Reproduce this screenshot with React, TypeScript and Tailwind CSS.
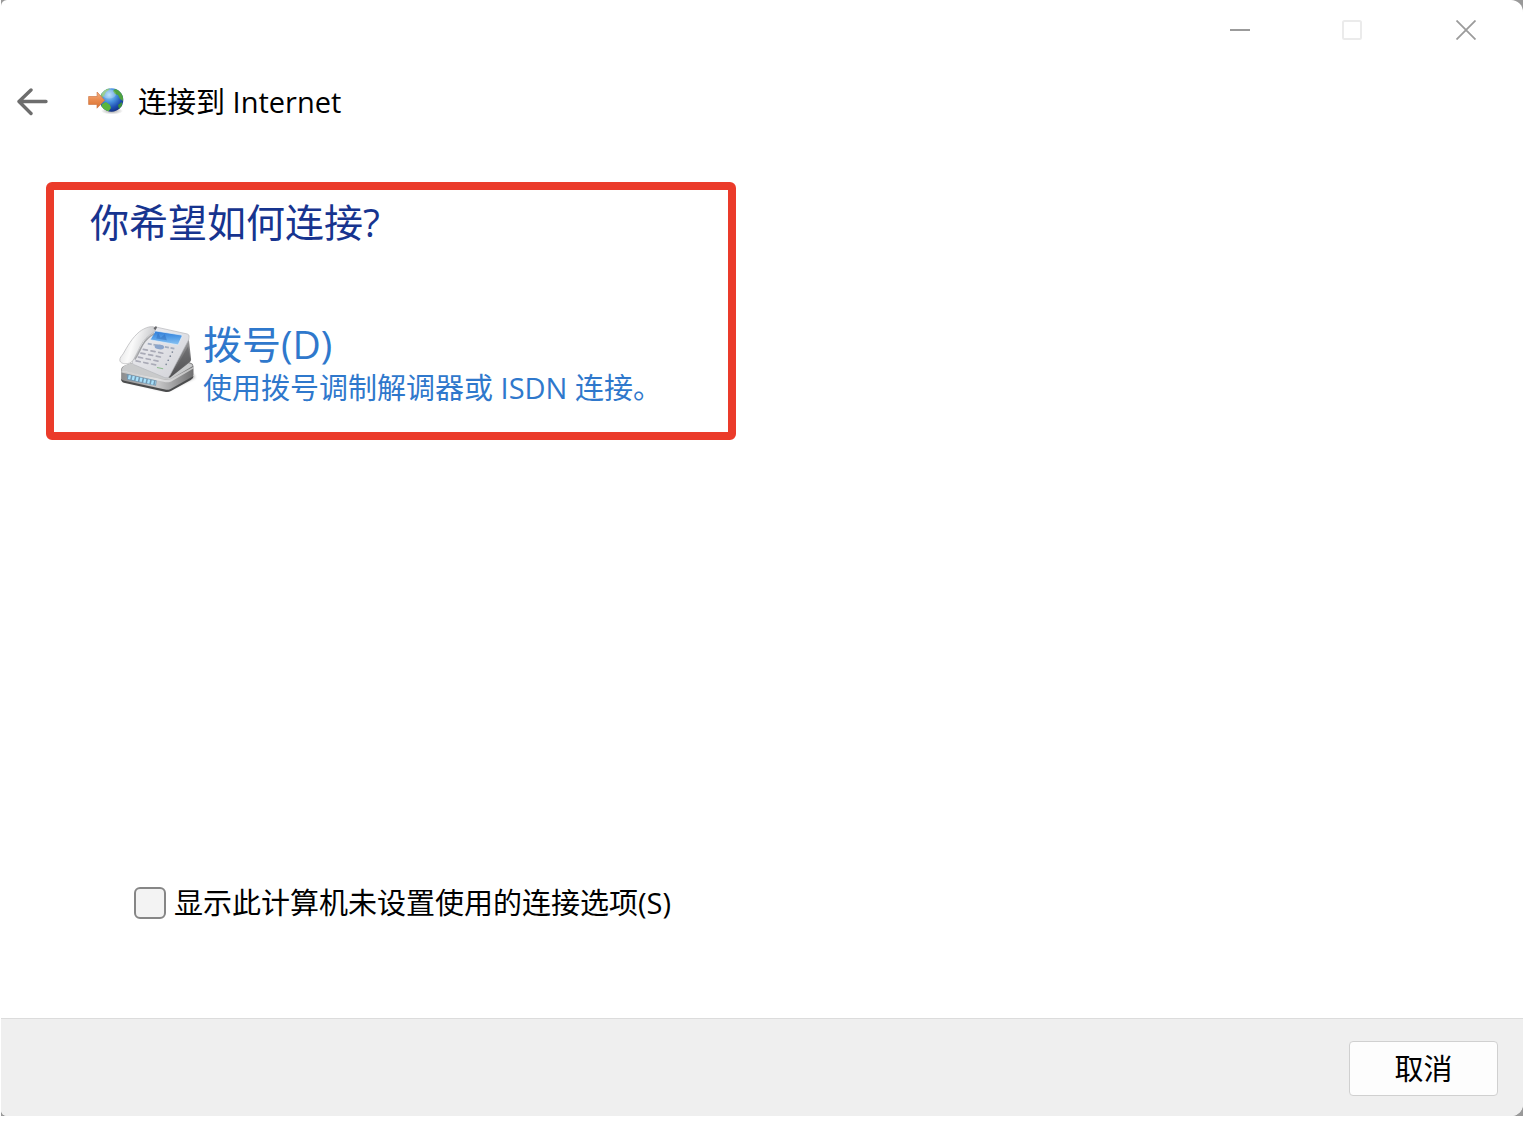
import { useState } from "react";

function BackArrowIcon() {
  return (
    <svg width="32" height="28" viewBox="0 0 32 28" fill="none" stroke="#6d6d6d" strokeWidth="3.4" strokeLinecap="round" strokeLinejoin="round">
      <path d="M15 2 3 13.500l12 12M3 13.500h27" />
    </svg>
  );
}

function GlobeIcon() {
  return (
    <svg width="36" height="28" viewBox="0 1 36 28">
      <defs>
        <radialGradient id="globe" cx="0.4" cy="0.28" r="0.75">
          <stop offset="0" stopColor="#a9d8f8" />
          <stop offset="0.4" stopColor="#4a93df" />
          <stop offset="0.75" stopColor="#1d4db0" />
          <stop offset="1" stopColor="#14307e" />
        </radialGradient>
        <linearGradient id="arrow" x1="0" y1="0" x2="0" y2="1">
          <stop offset="0" stopColor="#f5b083" />
          <stop offset="0.5" stopColor="#e98a4e" />
          <stop offset="1" stopColor="#d9702f" />
        </linearGradient>
        <radialGradient id="globeShadow">
          <stop offset="0" stopColor="#777" stopOpacity="0.7" />
          <stop offset="1" stopColor="#777" stopOpacity="0" />
        </radialGradient>
        <clipPath id="globeClip">
          <circle cx="23.500" cy="13" r="11.800" />
        </clipPath>
      </defs>
      <ellipse cx="24" cy="24" rx="11" ry="3.500" fill="url(#globeShadow)" />
      <circle cx="23.500" cy="13" r="11.800" fill="url(#globe)" />
      <g clipPath="url(#globeClip)">
        <path d="M12 7c3-4 6-6 10-6l-1 2-3 2-2 4-4 3z" fill="#7fbf78" />
        <path d="M27 2c4 0 7 3 8 7l0 5-3-2-2-4-3-1-2-3z" fill="#4fa33f" />
        <path d="M14 17l4-2 4 3 1 3-3 4-4-2-3-3z" fill="#5cb53c" />
        <path d="M30 18l4-3 0 4-3 3z" fill="#3b913b" />
        <ellipse cx="21" cy="7" rx="7" ry="4.500" fill="#fff" opacity="0.22" />
      </g>
      <path d="M0.600 9.500h8.500V5l7.500 8.200-7.600 8V17.500H0.600z" fill="url(#arrow)" stroke="#d07a48" strokeWidth="0.700" />
    </svg>
  );
}

function PhoneIcon() {
  return (
    <svg width="80" height="72" viewBox="27 22 234 211" className="shrink-0">
      <defs>
        <linearGradient id="body" x1="0" y1="0" x2="1" y2="1">
          <stop offset="0" stopColor="#f0f0f4" />
          <stop offset="1" stopColor="#d0d1d6" />
        </linearGradient>
        <linearGradient id="side" x1="0.500" y1="0" x2="0.600" y2="1">
          <stop offset="0" stopColor="#a0a0a2" />
          <stop offset="1" stopColor="#4c4c4e" />
        </linearGradient>
        <linearGradient id="base" x1="0" y1="0" x2="1" y2="0">
          <stop offset="0" stopColor="#8b8c8d" />
          <stop offset="0.500" stopColor="#c9c9ca" />
          <stop offset="0.700" stopColor="#a5a5a6" />
          <stop offset="1" stopColor="#6f6f70" />
        </linearGradient>
        <linearGradient id="handset" x1="0" y1="0" x2="1" y2="0.300">
          <stop offset="0" stopColor="#d9dadb" />
          <stop offset="0.450" stopColor="#fafafa" />
          <stop offset="1" stopColor="#c3c4c7" />
        </linearGradient>
        <linearGradient id="screen" x1="0" y1="0" x2="0" y2="1">
          <stop offset="0" stopColor="#2f7bd6" />
          <stop offset="0.500" stopColor="#559fe8" />
          <stop offset="1" stopColor="#8cc4f2" />
        </linearGradient>
        <filter id="phoneShadow" x="-20%" y="-50%" width="140%" height="200%">
          <feGaussianBlur stdDeviation="4" />
        </filter>
      </defs>
      <path d="M38 198 170 230 252 190 240 176 60 180z" fill="#444" opacity="0.600" filter="url(#phoneShadow)" />
      <path d="M36 168q0-8 9-12l30-12 158 2q14 2 15 12v24q0 6-8 10l-58 34q-8 4-18 2L44 204q-8-2-8-8z" fill="url(#base)" />
      <path d="M38 166q2-8 12-12l26-8 156 2q12 2 14 9L182 194q-8 4-18 2L40 172z" fill="#c9cacb" />
      <path d="M37 170 162 197q10 2 20-2l66-36v5l-65 38q-10 4-20 2L37 176z" fill="#f2f2f2" opacity="0.600" />
      <path d="M36 194q2 4 9 6l120 26q8 2 16-2l67-38q0 8-8 12l-58 32q-8 4-18 2L44 206q-8-3-8-12z" fill="#4b4c4d" />
      <path d="M232 76q3 4 4 16l5 46q0 5-4 8l-58 45-14-4z" fill="url(#side)" />
      <path d="M232 100 239 141 184 184z" fill="#555557" opacity="0.450" />
      <path d="M128 47q4-5 12-4l90 20q7 2 5 10l-1 7-56 106q-4 8-14 5L74 153q-9-3-5-11z" fill="url(#body)" stroke="#b4b5ba" strokeWidth="2" />
      <path d="m136 54 76 12q3 1 2 4l-11 25-82-15z" fill="url(#screen)" stroke="#e5eff8" strokeWidth="2" />
      <path d="m144 60 8 14 12-10 6 17-31-5z" fill="#2b66b8" opacity="0.450" />
      <path d="m114 91 78 15" stroke="#a3adbf" strokeWidth="5" strokeDasharray="12 5" />
      <ellipse cx="148" cy="101" rx="14" ry="7" fill="#8ba5cb" transform="rotate(8 148 101)" />
      <g stroke="#a9aab6" strokeWidth="5" strokeLinecap="round" strokeDasharray="12 11">
        <path d="m101 108 60 12" />
        <path d="m94 119 60 12" />
        <path d="m87 131 60 12" />
        <path d="m80 142 60 12" />
      </g>
      <g fill="#7e8798">
        <circle cx="186" cy="116" r="2.500" />
        <circle cx="180" cy="128" r="2.500" />
        <circle cx="174" cy="140" r="2.500" />
        <circle cx="168" cy="152" r="2.500" />
      </g>
      <path d="m141 161 18 4" stroke="#8cba8e" strokeWidth="3" />
      <path d="M90 56c14-10 28-16 40-14 9 3 8 11 0 17-16 10-29 22-37 38-7 14-12 26-19 38-5 9-11 14-20 15-11 1-21-2-22-10 0-8 5-12 10-19C54 100 68 74 90 56z" fill="url(#handset)" stroke="#b2b3b5" strokeWidth="2" />
      <path d="M76 138c10-15 15-28 23-43 8-14 19-24 34-33" fill="none" stroke="#88898c" strokeWidth="4" opacity="0.700" />
      <path d="m131 46 6-6q5 0 4 5l-5 7" fill="#67686b" />
      <path d="M52 180 140 199 138 215 54 197z" fill="#7296b0" />
      <path d="m57 189 80 18" stroke="#a7e0fa" strokeWidth="12" strokeDasharray="7 4.500" />
    </svg>
  );
}

export default function App() {
  const [showAll, setShowAll] = useState(false);

  return (
    <div className="flex min-h-screen flex-col bg-white pb-[7px] pl-px font-['Open_Sans','Noto_Sans_CJK_SC',sans-serif] text-[29px] leading-10 text-black">
      <div className="flex grow flex-col bg-[#999]">
        <div className="flex grow flex-col overflow-hidden rounded-tl-[6px] rounded-tr-xl rounded-br-xl rounded-bl-[6px] bg-white">
          <div className="flex h-[60px] justify-end">
            <button type="button" aria-label="最小化" className="flex w-28 items-center justify-center">
              <svg width="20" height="20" viewBox="0 0 20 20" stroke="#9b9b9b" strokeWidth="2">
                <path d="M0 10h20" />
              </svg>
            </button>
            <button type="button" aria-label="最大化" disabled className="flex w-28 items-center justify-center">
              <svg width="20" height="20" viewBox="0 0 20 20" fill="none" stroke="#ebebeb" strokeWidth="2">
                <rect x="1" y="1" width="18" height="18" rx="1.500" />
              </svg>
            </button>
            <button type="button" aria-label="关闭" className="flex w-[115px] items-center justify-center">
              <svg width="20" height="20" viewBox="0 0 20 20" stroke="#9b9b9b" strokeWidth="1.800">
                <path d="m0.500 0.500 19 19M19.500 0.500l-19 19" />
              </svg>
            </button>
          </div>

          <header className="flex items-center px-[15px] pt-[22px] pb-[18px]">
            <button type="button" aria-label="返回">
              <BackArrowIcon />
            </button>
            <div className="ml-10 flex items-center gap-[14px]">
              <GlobeIcon />
              <h1>连接到 Internet</h1>
            </div>
          </header>

          <main className="flex grow flex-col px-[45px] pt-[42px] pb-[95px]">
            <section className="w-full max-w-[690px] rounded-md border-8 border-[#eb3b2a] px-9 pb-6">
              <h2 className="text-[39px] leading-[64px] text-[#17348f]">你希望如何连接?</h2>
              <button type="button" className="mt-[66px] flex items-start gap-[5px] pl-7 text-left text-[#2f78cc]">
                <PhoneIcon />
                <span className="block">
                  <span className="block text-[39px] leading-[48px]">拨号(D)</span>
                  <span className="block">使用拨号调制解调器或 ISDN 连接。</span>
                </span>
              </button>
            </section>

            <label className="mt-auto ml-[88px] flex items-center gap-2 self-start">
              <input
                type="checkbox"
                checked={showAll}
                onChange={(e) => setShowAll(e.target.checked)}
                className="size-8 appearance-none rounded-md border-2 border-[#868686] bg-[#f3f3f3] checked:bg-[#2f78cc]"
              />
              <span>显示此计算机未设置使用的连接选项(S)</span>
            </label>
          </main>

          <footer className="flex justify-end border-t border-[#dcdcdc] bg-[#efefef] px-[25px] pt-[22px] pb-5">
            <button type="button" className="h-[55px] w-[149px] rounded-sm border border-[#d0d0d0] bg-[#fdfdfd]">
              取消
            </button>
          </footer>
        </div>
      </div>
    </div>
  );
}
